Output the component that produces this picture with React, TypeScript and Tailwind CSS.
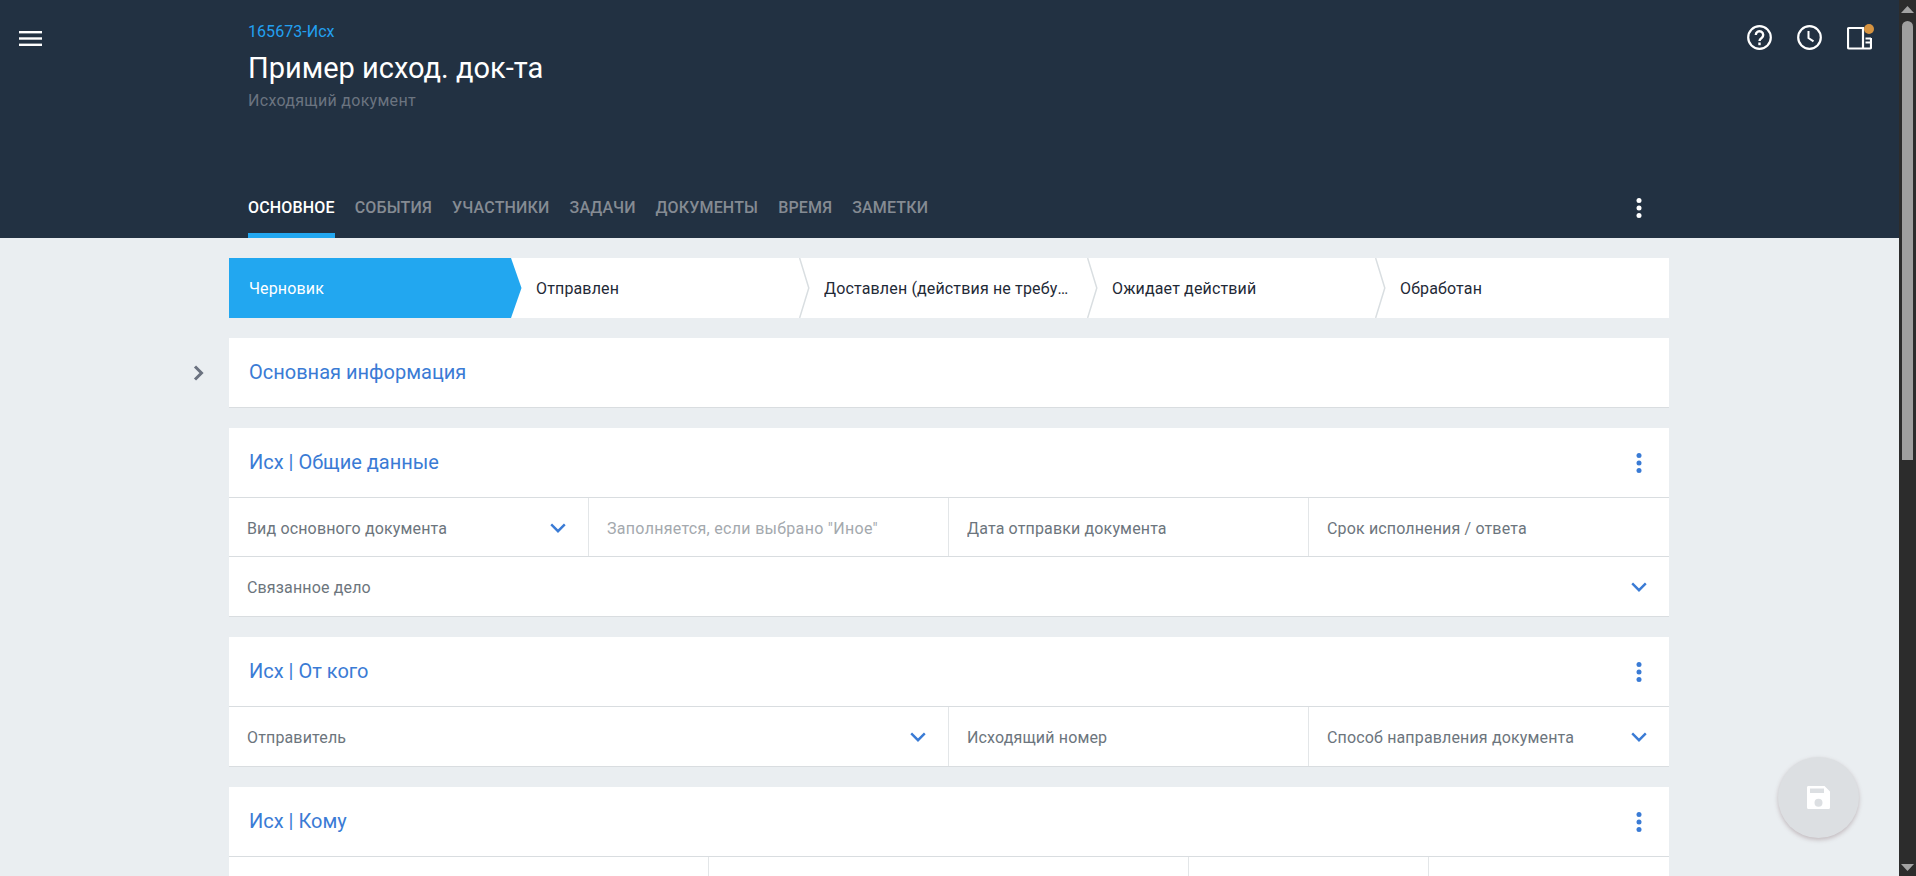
import React from "react";

const Chevron = () => (
  <svg width="16" height="10" viewBox="0 0 16 10" className="shrink-0 mt-[1px] text-[#3a7bd5]" fill="none" stroke="currentColor" strokeWidth="2.4">
    <path d="M1.2 1.4 8 8.2l6.8-6.8" />
  </svg>
);

const Dots = ({ className }: { className: string }) => (
  <svg width="6" height="22" viewBox="0 0 6 22" className={className} fill="currentColor">
    <circle cx="3" cy="3.5" r="2.5" />
    <circle cx="3" cy="11" r="2.5" />
    <circle cx="3" cy="18.5" r="2.5" />
  </svg>
);

const Field = ({ label, placeholder, select, className }: { label: string; placeholder?: boolean; select?: boolean; className: string }) => (
  <div className={`h-full flex items-center justify-between pl-[18px] pr-[22px] border-r border-[#e3e6e8] last:border-r-0 ${className}`}>
    <span className={`text-[16px] leading-[20px] pt-[3px] truncate ${placeholder ? "tracking-[0.3px] text-[#a4a9ae]" : "tracking-[0.15px] text-[#6c757d]"}`}>{label}</span>
    {select && <Chevron />}
  </div>
);

const Card = ({ title, dots = true, children }: { title: string; dots?: boolean; children?: React.ReactNode }) => (
  <section className="bg-white border-b border-[#d9dde0]">
    <div className={`flex items-center justify-between pl-5 pr-[27px] ${children ? "h-[70px] border-b border-[#d9dde0]" : "h-[69px]"}`}>
      <h2 className="text-[20px] pb-[2px] text-[#3a7bd5] font-normal">{title}</h2>
      {dots && <Dots className="text-[#3a7bd5]" />}
    </div>
    {children}
  </section>
);

const steps = ["Черновик", "Отправлен", "Доставлен (действия не требуются)", "Ожидает действий", "Обработан"];

const Stepper = () => (
  <div className="grid grid-cols-5 h-[60px] bg-white">
    {steps.map((s, i) => (
      <div key={s} className={`relative flex items-center pr-[18px] min-w-0 ${i === 0 ? "pl-5" : "pl-[19px]"}`}>
        {i === 0 && (
          <svg className="absolute left-0 top-0" width="293" height="60" viewBox="0 0 293 60">
            <path d="M0 0H282L292.500 30 282 60H0Z" fill="#22a7f0" />
          </svg>
        )}
        {i > 0 && i < 4 && (
          <svg className="absolute right-[-6px] top-0 z-10" width="12" height="60" viewBox="0 0 12 60" fill="none" stroke="#d9dee1" strokeWidth="1.5">
            <path d="M0.600 0 9.800 30 0.600 60" />
          </svg>
        )}
        <span className={`relative truncate text-[16px] leading-[20px] pt-[1px] tracking-[0.15px] ${i === 0 ? "text-white" : "text-[#1f2a37]"}`}>{s}</span>
      </div>
    ))}
  </div>
);

const tabs = ["Основное", "События", "Участники", "Задачи", "Документы", "Время", "Заметки"];

export default function App() {
  return (
    <div className="flex h-[876px] w-[1916px] overflow-hidden bg-[#eaeef1] font-['Roboto',sans-serif]">
      <div className="relative flex-1 min-w-0 overflow-hidden">
        <header className="relative h-[238px] bg-[#223142] flex flex-col">
          <button className="absolute left-[19px] top-[31px]" aria-label="Меню">
            <svg width="23" height="15" viewBox="0 0 23 15" fill="white">
              <rect width="23" height="2.4" y="0" />
              <rect width="23" height="2.4" y="6.3" />
              <rect width="23" height="2.4" y="12.6" />
            </svg>
          </button>
          <div className="absolute right-[27px] top-[25px] flex items-start gap-[25px]">
            <svg width="25" height="25" viewBox="0 0 25 25" fill="none" stroke="white" strokeWidth="2.200">
              <circle cx="12.500" cy="12.500" r="11.300" />
              <path d="M8.800 10a3.700 3.700 0 1 1 5.800 3c-1.400 1-2.100 1.600-2.100 3" strokeWidth="2.400" />
              <path d="M12.500 17.500v2.700" strokeWidth="2.400" />
            </svg>
            <svg width="25" height="25" viewBox="0 0 25 25" fill="none" stroke="white" strokeWidth="2.200">
              <circle cx="12.500" cy="12.500" r="11.300" />
              <path d="M11.500 6v7l5 3.400" strokeWidth="2" />
            </svg>
            <div className="relative w-[25px] h-[25px]">
              <svg width="25" height="25" viewBox="0 0 25 25" fill="none" stroke="white" strokeWidth="2.200">
                <path d="M2 3h14v20.500H2a1 1 0 0 1-1-1V4a1 1 0 0 1 1-1ZM16 23.500h7a1 1 0 0 0 1-1V13" />
                <path d="M18.500 13.500H24M18.500 17.500H24" strokeWidth="2" />
              </svg>
              <span className="absolute right-[-2px] top-[-1px] w-[10px] h-[10px] rounded-full bg-[#d69340]" />
            </div>
          </div>
          <div className="pl-[248px] pt-[23px]">
            <div className="text-[16px] leading-[18px] tracking-[0.05px] text-[#23a0f0]">165673-Исх</div>
            <h1 className="mt-[9px] text-[29px] leading-[36px] text-white font-normal">Пример исход. док-та</h1>
            <div className="mt-[5px] text-[16px] leading-[20px] tracking-[0.3px] text-[#6b7480]">Исходящий документ</div>
          </div>
          <nav className="mt-auto flex items-start pl-[248px] pr-[257px] h-[53px]">
            {tabs.map((t, i) => (
              <div key={t} className={`h-full mr-5 pt-[11px] text-[16px] leading-[24px] tracking-[0.17px] font-medium uppercase border-b-[5px] ${i === 0 ? "text-white border-[#22a7f0]" : "text-[#858b93] border-transparent"}`}>
                {t}
              </div>
            ))}
            <Dots className="ml-auto mt-[12px] text-white" />
          </nav>
        </header>

        <div className="relative">
          <div className="absolute left-[193px] top-[127px]">
            <svg width="12" height="16" viewBox="0 0 12 16" fill="none" stroke="#6b7280" strokeWidth="3">
              <path d="M2 1.500 8.500 8 2 14.500" />
            </svg>
          </div>
          <main className="w-[1440px] ml-[229px] pt-5 flex flex-col gap-5">
            <Stepper />
            <Card title="Основная информация" dots={false} />
            <Card title="Исх | Общие данные">
              <div className="grid grid-cols-4 h-[59px] border-b border-[#d9dde0]">
                <Field className="" label="Вид основного документа" select />
                <Field className="" label="Заполняется, если выбрано &quot;Иное&quot;" placeholder />
                <Field className="" label="Дата отправки документа" />
                <Field className="" label="Срок исполнения / ответа" />
              </div>
              <div className="grid grid-cols-1 h-[59px]">
                <Field className="" label="Связанное дело" select />
              </div>
            </Card>
            <Card title="Исх | От кого">
              <div className="grid grid-cols-4 h-[59px]">
                <Field className="col-span-2" label="Отправитель" select />
                <Field className="" label="Исходящий номер" />
                <Field className="" label="Способ направления документа" select />
              </div>
            </Card>
            <Card title="Исх | Кому">
              <div className="grid grid-cols-6 h-[59px]">
                <Field className="col-span-2" label="" />
                <Field className="col-span-2" label="" />
                <Field className="" label="" />
                <Field className="" label="" />
              </div>
            </Card>
          </main>
        </div>

        <button aria-label="Сохранить" className="absolute left-[1778px] top-[757px] w-[81px] h-[81px] rounded-full bg-[#dcdfe2] shadow-[0_2px_4px_rgba(120,90,95,0.35)] flex items-center justify-center">
          <svg width="23" height="23" viewBox="0 0 23 23" fill="white">
            <path fillRule="evenodd" d="M1 0h16.500L23 5.500V21.500a1.500 1.500 0 0 1-1.500 1.500H1.500A1.500 1.500 0 0 1 0 21.500V1.500A1.500 1.500 0 0 1 1 0ZM3 2.500v4.500h14V2.500ZM11.500 12.700a4 4 0 1 0 0 8 4 4 0 0 0 0-8Z" />
          </svg>
        </button>
      </div>

      <div className="w-[17px] shrink-0 bg-[#2c2c2c] flex flex-col items-center">
        <svg width="17" height="17" viewBox="0 0 17 17" fill="#a3a3a3"><path d="M8.500 6 15 13H2Z" /></svg>
        <div className="mt-[4px] w-[11px] h-[439px] rounded-t-full bg-[#9f9f9f]" />
        <svg className="mt-auto" width="17" height="17" viewBox="0 0 17 17" fill="#a3a3a3"><path d="M2 5h13L8.500 12Z" /></svg>
      </div>
    </div>
  );
}
